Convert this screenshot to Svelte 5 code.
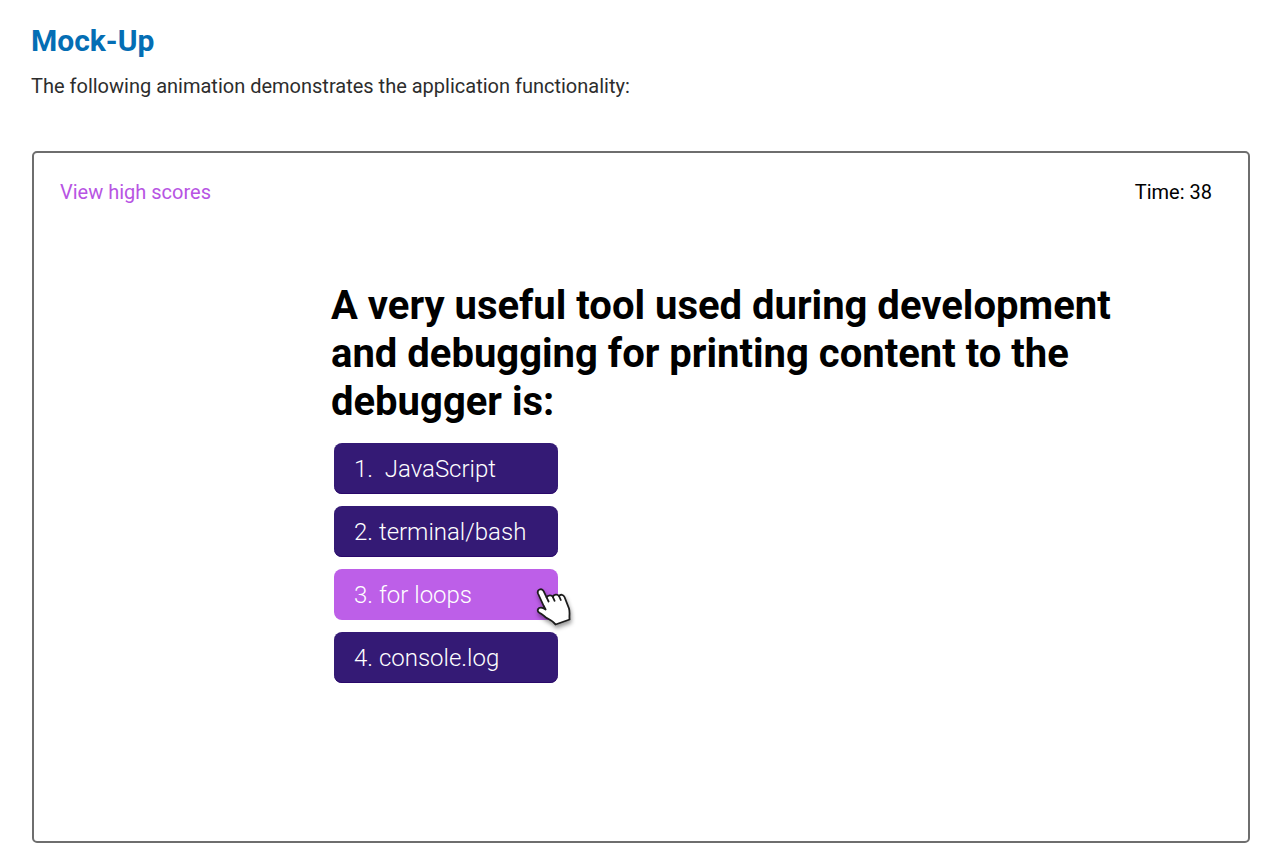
<script>
  const answers = ['1.\u00a0 JavaScript', '2. terminal/bash', '3. for loops', '4. console.log'];
  let active = $state(2);
</script>

<main>
  <h1>Mock-Up</h1>
  <p class="intro">The following animation demonstrates the application functionality:</p>

  <section class="quiz">
    <header>
      <a href="#scores">View high scores</a>
      <span class="time">Time: 38</span>
    </header>
    <div class="question">
      <h2>A very useful tool used during development and debugging for printing content to the debugger is:</h2>
      <div class="answers">
        {#each answers as answer, i}
          <button type="button" class:active={active === i} onclick={() => (active = i)}>
            {answer}
            {#if active === i}
              <svg class="hand" viewBox="0 0 40 44" width="40" height="44" aria-hidden="true">
                <g stroke="#1c1c1c" stroke-width="1.8" stroke-linejoin="round" stroke-linecap="round">
                  <path d="M8.500 20.500 3 8.500C1.600 4.500 6.800 2.600 8.600 6.200L11.600 12.300C13 10 16.500 9.700 17.800 11.800 19 9.300 22.500 9 24 11 25.500 9 28.500 9.500 29.500 12L34 23.500C35.200 27.500 34 31 34.600 34.500L20.500 39.500C18 35.500 14.500 34.500 11 32.600 8.500 30.800 7.500 29 4.500 27.800 1.500 26.500 2.600 22.500 6 22.600 8 22.700 9.500 23.700 10.600 24.500Z" fill="#fff" />
                  <path d="m11.600 12.300 2 4.200M17.800 11.800l1.800 4M24 11l1.800 4" fill="none" />
                </g>
              </svg>
            {/if}
          </button>
        {/each}
      </div>
    </div>
  </section>
</main>

<style>
  :global(body) { margin: 0; background: #fff; }
  main { padding: 23px 28px 17px 31px; font-family: Roboto, sans-serif; color: #2d2d2d; }
  h1 { margin: 0; font-size: 30px; line-height: 36px; font-weight: 700; color: #046eb4; }
  .intro { margin: 12px 0 50px; font-size: 20px; line-height: 30px; }
  .quiz { box-sizing: border-box; min-height: 692px; margin-left: 1px; border: 2px solid #6e6e6e; border-radius: 5px; padding: 24px 36px 24px 26px; color: #000; }
  header { display: flex; justify-content: space-between; font-size: 20px; line-height: 30px; }
  a { color: #b754e3; text-decoration: none; }
  .question { margin: 75px 60px 0 271px; }
  h2 { margin: 0; font-size: 40px; line-height: 48px; font-weight: 700; }
  .answers { display: flex; flex-direction: column; align-items: flex-start; gap: 12px; padding: 17px 3px; }
  button { position: relative; width: 224px; height: 51px; padding: 0 20px; border: 0; border-radius: 8px; background: #341a75; color: #fff; font: 300 24px/32px Roboto, sans-serif; text-align: left; box-shadow: inset 0 -1px #29086a; cursor: pointer; }
  .active { background: #bd5fe8; box-shadow: none; }
  .hand { position: absolute; left: 201px; top: 16px; filter: drop-shadow(1px 3px 2px #0006); }
</style>
